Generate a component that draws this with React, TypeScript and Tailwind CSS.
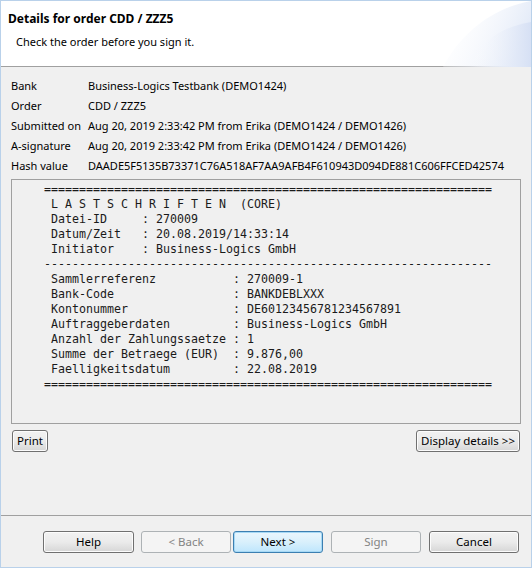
import type { ReactNode } from 'react'

const UI = { fontFamily: '"Noto Sans", "Open Sans", Arial, sans-serif' }
const MONO = { fontFamily: '"DejaVu Sans Mono", "Liberation Mono", monospace' }

const INFO: [string, string][] = [
  ['Bank', 'Business-Logics Testbank (DEMO1424)'],
  ['Order', 'CDD / ZZZ5'],
  ['Submitted on', 'Aug 20, 2019 2:33:42 PM from Erika (DEMO1424 / DEMO1426)'],
  ['A-signature', 'Aug 20, 2019 2:33:42 PM from Erika (DEMO1424 / DEMO1426)'],
  ['Hash value', 'DAADE5F5135B73371C76A518AF7AA9AFB4F610943D094DE881C606FFCED42574'],
]

const EQ = '='.repeat(64)
const DASH = '-'.repeat(64)

const REPORT = [
  EQ,
  ' L A S T S C H R I F T E N  (CORE)',
  ' Datei-ID     : 270009',
  ' Datum/Zeit   : 20.08.2019/14:33:14',
  ' Initiator    : Business-Logics GmbH',
  DASH,
  ' Sammlerreferenz           : 270009-1',
  ' Bank-Code                 : BANKDEBLXXX',
  ' Kontonummer               : DE60123456781234567891',
  ' Auftraggeberdaten         : Business-Logics GmbH',
  ' Anzahl der Zahlungssaetze : 1',
  ' Summe der Betraege (EUR)  : 9.876,00',
  ' Faelligkeitsdatum         : 22.08.2019',
  EQ,
]

type Variant = 'normal' | 'default' | 'disabled'

function Btn({ children, variant = 'normal', className = '' }: { children: ReactNode; variant?: Variant; className?: string }) {
  const look =
    variant === 'default'
      ? 'border-[#3c7fb1] bg-gradient-to-b from-[#eaf6fd] via-[#d9f0fc] to-[#bee6fd] text-black shadow-[inset_0_0_0_1px_#a7d9f5]'
      : variant === 'disabled'
        ? 'border-[#adb2b5] bg-[#f4f4f4] text-[#838383]'
        : 'border-[#707070] bg-gradient-to-b from-[#f2f2f2] via-[#ebebeb] to-[#d6d6d6] text-black shadow-[inset_0_0_0_1px_#fcfcfc]'
  return (
    <div
      className={`h-[22px] flex items-center justify-center rounded-[3px] border text-[11.5px] leading-none ${look} ${className}`}
    >
      {children}
    </div>
  )
}

function HeaderSwoosh() {
  return (
    <svg className="absolute right-0 top-0" width="96" height="66" viewBox="0 0 96 66">
      <defs>
        <linearGradient id="sw1" x1="0" y1="0" x2="1" y2="0.3">
          <stop offset="0" stopColor="#ffffff" stopOpacity="0" />
          <stop offset="1" stopColor="#e4ebf8" />
        </linearGradient>
        <linearGradient id="sw2" x1="0" y1="0" x2="1" y2="0">
          <stop offset="0" stopColor="#ffffff" stopOpacity="0" />
          <stop offset="1" stopColor="#d6e0f4" />
        </linearGradient>
      </defs>
      <path d="M8 66 C 28 28, 62 6, 96 0 L 96 66 Z" fill="url(#sw1)" />
      <path d="M34 66 C 46 40, 66 26, 96 21 L 96 66 Z" fill="url(#sw2)" />
    </svg>
  )
}

export default function App() {
  return (
    <div
      className="w-[532px] h-[568px] flex flex-col border border-[#b9d1ea] bg-[#f0f0f0] text-black overflow-hidden"
      style={UI}
    >
      {/* Title area */}
      <div className="relative h-[66px] shrink-0 bg-white border-b border-[#a0a0a0] pl-[7px] pt-[8px]">
        <HeaderSwoosh />
        <p className="relative text-[12px] font-bold leading-[20px]">Details for order CDD / ZZZ5</p>
        <p className="relative mt-[3px] pl-[8px] text-[11px] leading-[20px]">Check the order before you sign it.</p>
      </div>

      {/* Order summary */}
      <div className="flex-1 flex flex-col px-[10px] pt-[9px]">
        <div className="grid grid-cols-[77px_1fr] text-[11px]">
          {INFO.map(([label, value]) => (
            <div key={label} className="contents">
              <span className="h-[20px] leading-[20px] whitespace-nowrap">{label}</span>
              <span className="h-[20px] leading-[20px] whitespace-nowrap">{value}</span>
            </div>
          ))}
        </div>

        <div className="mt-[3px] h-[245px] w-[510px] border border-[#a0a0a0] pl-[32px] pt-[2px]">
          <pre className="text-[11.63px] leading-[15px] text-[#1a1a1a]" style={MONO}>
            {REPORT.join('\n')}
          </pre>
        </div>

        <div className="mt-[6px] flex justify-between pl-[1px] pr-[1px] w-[510px]">
          <Btn className="w-[36px]">Print</Btn>
          <Btn className="w-[104px]">Display details &gt;&gt;</Btn>
        </div>
      </div>

      {/* Wizard buttons */}
      <div className="h-[52px] shrink-0 border-t border-[#a0a0a0] flex items-start pt-[15px] pl-[42px]">
        <Btn className="w-[91px]">Help</Btn>
        <Btn variant="disabled" className="w-[90px] ml-[7px]">&lt; Back</Btn>
        <Btn variant="default" className="w-[90px] ml-[2px]">Next &gt;</Btn>
        <Btn variant="disabled" className="w-[90px] ml-[8px]">Sign</Btn>
        <Btn className="w-[90px] ml-[8px]">Cancel</Btn>
      </div>
    </div>
  )
}
